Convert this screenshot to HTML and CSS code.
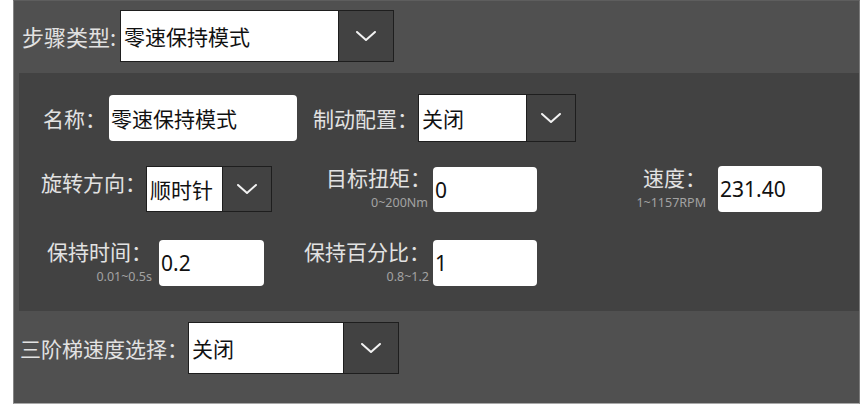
FILE: index.html
```html
<!DOCTYPE html>
<html lang="zh-CN">
<head>
<meta charset="utf-8">
<title>步骤配置</title>
<link rel="stylesheet" href="styles.css">
</head>
<body>
<div class="panel">
  <div class="top-row">
    <span class="lbl lbl-top">步骤类型:</span>
    <div class="select sel-top">
      <div class="sel-value">零速保持模式</div>
      <div class="sel-btn btn-wide"><svg class="chev" viewBox="0 0 20 10" width="20" height="10"><polyline points="1,1 10,9 19,1"/></svg></div>
    </div>
  </div>

  <div class="inner">
    <div class="row row1">
      <span class="lbl lbl-name">名称：</span>
      <div class="input in-name">零速保持模式</div>
      <span class="lbl lbl-brake">制动配置：</span>
      <div class="select sel-brake">
        <div class="sel-value">关闭</div>
        <div class="sel-btn"><svg class="chev" viewBox="0 0 20 10" width="20" height="10"><polyline points="1,1 10,9 19,1"/></svg></div>
      </div>
    </div>

    <div class="row row2">
      <span class="lbl lbl-dir">旋转方向：</span>
      <div class="select sel-dir">
        <div class="sel-value">顺时针</div>
        <div class="sel-btn"><svg class="chev" viewBox="0 0 20 10" width="20" height="10"><polyline points="1,1 10,9 19,1"/></svg></div>
      </div>
      <div class="lblock lb-torque"><span class="lbl">目标扭矩：</span><span class="sub">0~200Nm</span></div>
      <div class="input num in-torque">0</div>
      <div class="lblock lb-speed"><span class="lbl">速度：</span><span class="sub">1~1157RPM</span></div>
      <div class="input num in-speed">231.40</div>
    </div>

    <div class="row row3">
      <div class="lblock lb-hold"><span class="lbl">保持时间：</span><span class="sub">0.01~0.5s</span></div>
      <div class="input num in-hold">0.2</div>
      <div class="lblock lb-pct"><span class="lbl">保持百分比：</span><span class="sub">0.8~1.2</span></div>
      <div class="input num in-pct">1</div>
    </div>
  </div>

  <div class="bottom-row">
    <span class="lbl lbl-bottom">三阶梯速度选择：</span>
    <div class="select sel-bottom">
      <div class="sel-value">关闭</div>
      <div class="sel-btn btn-wide"><svg class="chev" viewBox="0 0 20 10" width="20" height="10"><polyline points="1,1 10,9 19,1"/></svg></div>
    </div>
  </div>
</div>
</body>
</html>
```

FILE: styles.css
```css
html, body {
  margin: 0;
  padding: 0;
  background: #ffffff;
}
body {
  font-family: "Noto Sans CJK SC", "Noto Sans", sans-serif;
}
.panel {
  margin-left: 13px;
  width: 847px;
  height: 404px;
  box-sizing: border-box;
  background: #505050;
  border-top: 1px solid #5e5e5e;
  border-left: 1px solid #858585;
  border-right: 1px solid #7a7a7a;
  border-bottom: 1px solid #a8a8a8;
  display: flex;
  flex-direction: column;
}
.lbl {
  font-size: 21px;
  color: #e2e2e2;
  white-space: nowrap;
  line-height: 28px;
}
.sub {
  font-family: "Noto Sans", "Noto Sans CJK SC", sans-serif;
  font-size: 12.5px;
  color: #a3a3a3;
  line-height: 14px;
  margin-top: 8px;
  white-space: nowrap;
}

/* select */
.select {
  display: flex;
  box-sizing: border-box;
  border: 1px solid #1e1e1e;
  flex: none;
}
.sel-value {
  flex: 1;
  background: #ffffff;
  color: #111111;
  font-size: 21px;
  padding-left: 3px;
  display: flex;
  align-items: center;
  white-space: nowrap;
}
.sel-btn {
  width: 48px;
  background: #424242;
  border-left: 1px solid #1e1e1e;
  display: flex;
  align-items: center;
  justify-content: center;
}
.btn-wide { width: 54px; }
.chev polyline {
  fill: none;
  stroke: #f2f2f2;
  stroke-width: 2;
  stroke-linecap: round;
  stroke-linejoin: round;
}

/* inputs */
.input {
  flex: none;
  box-sizing: border-box;
  background: #ffffff;
  border-radius: 4px;
  color: #111111;
  font-size: 21px;
  padding-left: 2px;
  display: flex;
  align-items: center;
  white-space: nowrap;
}
.num {
  font-family: "Noto Sans", "Noto Sans CJK SC", sans-serif;
}

/* top row */
.top-row {
  display: flex;
  align-items: center;
  padding: 9px 0 11px 8px;
}
.lbl-top {
  width: 98px;
  font-size: 22px;
}
.sel-top {
  width: 274px;
  height: 52px;
}

/* inner panel */
.inner {
  margin-left: 5px;
  height: 238px;
  box-sizing: border-box;
  background: #424242;
  padding-top: 21px;
}
.row {
  display: flex;
}
.row1 {
  height: 48px;
  align-items: center;
  padding-left: 24px;
}
.in-name {
  margin-left: 3px;
  width: 188px;
  height: 46px;
}
.lbl-brake {
  margin-left: 16px;
}
.sel-brake {
  width: 158px;
  height: 48px;
}

.row2 {
  margin-top: 24px;
  height: 46px;
  align-items: flex-start;
  padding-left: 22px;
}
.lbl-dir {
  padding-top: 2px;
}
.sel-dir {
  width: 126px;
  height: 46px;
}
.lblock {
  flex: none;
  display: flex;
  flex-direction: column;
  align-items: flex-end;
}
.lblock .lbl {
  line-height: 22px;
}
.lb-torque { width: 159px; }
.lb-torque .sub { margin-right: 3px; }
.in-torque {
  margin-left: 2px;
  margin-top: 1px;
  width: 104px;
  height: 45px;
}
.lb-speed { width: 169px; }
.in-speed {
  margin-left: 12px;
  width: 104px;
  height: 46px;
}

.row3 {
  margin-top: 28px;
  height: 46px;
  align-items: flex-start;
  padding-left: 22px;
}
.lb-hold { width: 111px; }
.in-hold {
  margin-left: 7px;
  width: 105px;
  height: 46px;
}
.lb-pct { width: 166px; }
.lb-pct .sub { margin-right: 1px; }
.in-pct {
  margin-left: 3px;
  width: 104px;
  height: 46px;
}

/* bottom row */
.bottom-row {
  display: flex;
  align-items: center;
  padding: 11px 0 0 6px;
}
.lbl-bottom {
  width: 168px;
}
.sel-bottom {
  width: 211px;
  height: 52px;
}
```
